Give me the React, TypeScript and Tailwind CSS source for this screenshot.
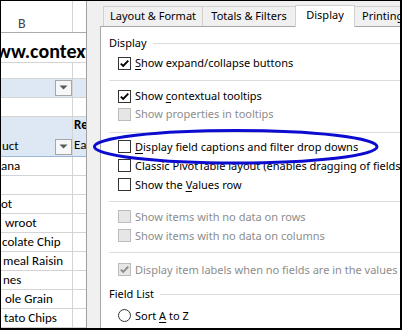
import React from "react";

const sheetFont = { fontFamily: "Carlito, Lato, sans-serif" };
const uiFont = { fontFamily: "'Noto Sans', 'Open Sans', sans-serif" };

function Drop() {
  return (
    <div className="w-[17px] h-[16px] bg-[#f7f7f7] border border-[#a6a6a6] flex items-center justify-center">
      <svg width="9" height="5" viewBox="0 0 9 5">
        <path d="M0.5 0.5 L8.5 0.5 L4.5 4.5 Z" fill="#595959" />
      </svg>
    </div>
  );
}

function Row({
  h,
  blue,
  b,
  c,
  line = "border-[#d4d4d4]",
}: {
  h: string;
  blue?: boolean;
  b?: React.ReactNode;
  c?: React.ReactNode;
  line?: string;
}) {
  return (
    <div className={`flex border-b ${line} ${h} ${blue ? "bg-[#dde8f4]" : "bg-white"}`}>
      <div className="w-[72px] shrink-0 border-r border-[#d4d4d4] relative overflow-hidden">{b}</div>
      <div className="flex-1 overflow-hidden relative">{c}</div>
    </div>
  );
}

function Cell({ text }: { text: string }) {
  return (
    <div className="h-full flex items-end pb-[1px] text-[13px] text-black whitespace-nowrap leading-[16px]">
      {text}
    </div>
  );
}

function Box({ checked, disabled }: { checked?: boolean; disabled?: boolean }) {
  return (
    <div
      className={`w-[13px] h-[13px] shrink-0 border flex items-center justify-center ${
        disabled ? "bg-[#e6e6e6] border-[#bcbcbc]" : "bg-white border-[#333333]"
      }`}
    >
      {checked && (
        <svg width="11" height="11" viewBox="0 0 11 11">
          <path
            d="M1.8 5.6 L4.2 8 L9.3 2.6"
            fill="none"
            stroke={disabled ? "#8a8a8a" : "#000"}
            strokeWidth="1.9"
          />
        </svg>
      )}
    </div>
  );
}

function Check({
  children,
  checked,
  disabled,
  h = "h-[19px]",
  mt = "",
}: {
  children: React.ReactNode;
  checked?: boolean;
  disabled?: boolean;
  h?: string;
  mt?: string;
}) {
  return (
    <div className={`flex items-center pl-[9px] ${h} ${mt}`}>
      <Box checked={checked} disabled={disabled} />
      <span
        className={`ml-[4px] whitespace-nowrap text-[11px] leading-[14px] ${
          disabled ? "text-[#8d8d8d]" : "text-black"
        }`}
      >
        {children}
      </span>
    </div>
  );
}

function Sep({ mt }: { mt: string }) {
  return <div className={`h-px bg-[#dcdcdc] ${mt}`} />;
}

function Section({ label, mt }: { label: string; mt: string }) {
  return (
    <div className={`flex items-center h-[16px] ${mt}`}>
      <span className="text-[11px] leading-[14px] text-black whitespace-nowrap">{label}</span>
      <div className="flex-1 h-px bg-[#dcdcdc] ml-[6px]" />
    </div>
  );
}

function Tab({
  label,
  w,
  selected,
  left,
}: {
  label: string;
  w: string;
  selected?: boolean;
  left?: boolean;
}) {
  return (
    <div
      className={`${w} shrink-0 -ml-px border border-b-0 flex items-center text-[11px] text-black whitespace-nowrap ${
        left ? "justify-start pl-[7px]" : "justify-center"
      } ${
        selected
          ? "h-[22px] -mb-px bg-white border-[#d0d0d0] relative z-10 pb-[2px]"
          : "h-[20px] bg-[#f0f0f0] border-[#d0d0d0]"
      }`}
    >
      {label}
    </div>
  );
}

export default function App() {
  return (
    <div className="w-[402px] h-[330px] relative overflow-hidden border-t border-l border-r-2 border-b-2 border-black flex bg-white">
      {/* spreadsheet */}
      <div className="w-[85px] shrink-0 flex flex-col" style={sheetFont}>
        <Row
          h="h-[32px]"
          line="border-[#ababab]"
          b={
            <div className="h-full flex items-center justify-start pl-[17px] pt-[13px] text-[14px] text-[#444]">
              B
            </div>
          }
        />
        <div className="h-[32px] border-b border-[#d4d4d4] bg-white relative overflow-hidden">
          <div className="absolute left-[-20px] top-[5px] text-[20px] font-bold text-black whitespace-nowrap leading-[26px]">
            www.contextures.com
          </div>
        </div>
        <Row h="h-[16px]" />
        <Row
          h="h-[20px]"
          blue
          b={
            <div className="h-full flex items-center justify-end">
              <Drop />
            </div>
          }
        />
        <Row h="h-[20px]" />
        <Row
          h="h-[40px]"
          blue
          line="border-[#9bb7d9]"
          b={
            <div className="h-full flex items-end justify-between pb-[1px]">
              <span className="text-[13px] text-black leading-[16px] pl-[1px] pb-[1px]">uct</span>
              <Drop />
            </div>
          }
          c={
            <div className="h-full flex flex-col justify-end pl-[1px] pb-[1px] text-[13px] leading-[20px] text-black">
              <span className="font-bold">Re</span>
              <span>Ea</span>
            </div>
          }
        />
        <Row h="h-[20px]" b={<Cell text="ana" />} />
        <Row h="h-[20px]" />
        <Row h="h-[20px]" b={<Cell text="ot" />} />
        <Row h="h-[20px]" b={<div className="pl-[4px] h-full"><Cell text="wroot" /></div>} />
        <Row h="h-[20px]" b={<div className="pl-[1px] h-full"><Cell text="colate Chip" /></div>} />
        <Row h="h-[20px]" b={<div className="pl-[2px] h-full"><Cell text="meal Raisin" /></div>} />
        <Row h="h-[20px]" b={<div className="pl-[2px] h-full"><Cell text="nes" /></div>} />
        <Row h="h-[20px]" b={<div className="pl-[4px] h-full"><Cell text="ole Grain" /></div>} />
        <Row h="h-[20px]" b={<div className="pl-[3px] h-full"><Cell text="tato Chips" /></div>} />
      </div>

      {/* dialog */}
      <div
        className="w-[320px] shrink-0 flex flex-col border-l border-[#a0a0a0] bg-[#f0f0f0] pl-[13px]"
        style={uiFont}
      >
        <div className="h-[25px] shrink-0 flex items-end pl-[4px]">
          <Tab label="Layout & Format" w="w-[100px]" />
          <Tab label="Totals & Filters" w="w-[94px]" />
          <Tab label="Display" w="w-[60px]" selected />
          <Tab label="Printing" w="w-[72px]" left />
        </div>
        <div className="flex-1 bg-white border-l border-t border-[#a8a8a8] pl-[8px] flex flex-col">
          <Section label="Display" mt="mt-[8px]" />
          <Check checked h="h-[18px]" mt="mt-[3px]">
            <u className="underline-offset-2">S</u>how expand/collapse buttons
          </Check>
          <Sep mt="mt-[8px]" />
          <Check checked h="h-[18px]" mt="mt-[6px]">
            Show <u className="underline-offset-2">c</u>ontextual tooltips
          </Check>
          <Check disabled h="h-[18px]">
            Show properties in tooltips
          </Check>
          <Sep mt="mt-[9px]" />
          <Check mt="mt-[4px]">
            <u className="underline-offset-2">D</u>isplay field captions and filter drop downs
          </Check>
          <Check>Classic PivotTable layout (enables dragging of fields in the grid)</Check>
          <Check>
            Show the <u className="underline-offset-2">V</u>alues row
          </Check>
          <Sep mt="mt-[7px]" />
          <Check disabled mt="mt-[5px]">
            Show items with no data on rows
          </Check>
          <Check disabled>Show items with no data on columns</Check>
          <Sep mt="mt-[7px]" />
          <Check disabled checked mt="mt-[7px]">
            Display item labels when no fields are in the values area
          </Check>
          <Section label="Field List" mt="mt-[7px]" />
          <div className="flex items-center pl-[9px] h-[19px] mt-[4px]">
            <div className="w-[13px] h-[13px] rounded-full border border-[#333333] bg-white shrink-0" />
            <span className="ml-[4px] text-[11px] leading-[14px] text-black whitespace-nowrap">
              Sort <u className="underline-offset-2">A</u> to Z
            </span>
          </div>
          <div className="flex items-center pl-[9px] h-[19px]">
            <div className="w-[13px] h-[13px] rounded-full border border-[#333333] bg-white shrink-0" />
            <span className="ml-[4px] text-[11px] leading-[14px] text-black whitespace-nowrap">
              Sort in data source order
            </span>
          </div>
        </div>
      </div>

      <svg
        className="absolute left-[-1px] top-[-1px] pointer-events-none"
        width="402"
        height="330"
        viewBox="0 0 402 330"
      >
        <ellipse cx="235.7" cy="146.8" rx="141.3" ry="16.2" fill="none" stroke="#0c0cd0" strokeWidth="3" />
      </svg>
    </div>
  );
}
